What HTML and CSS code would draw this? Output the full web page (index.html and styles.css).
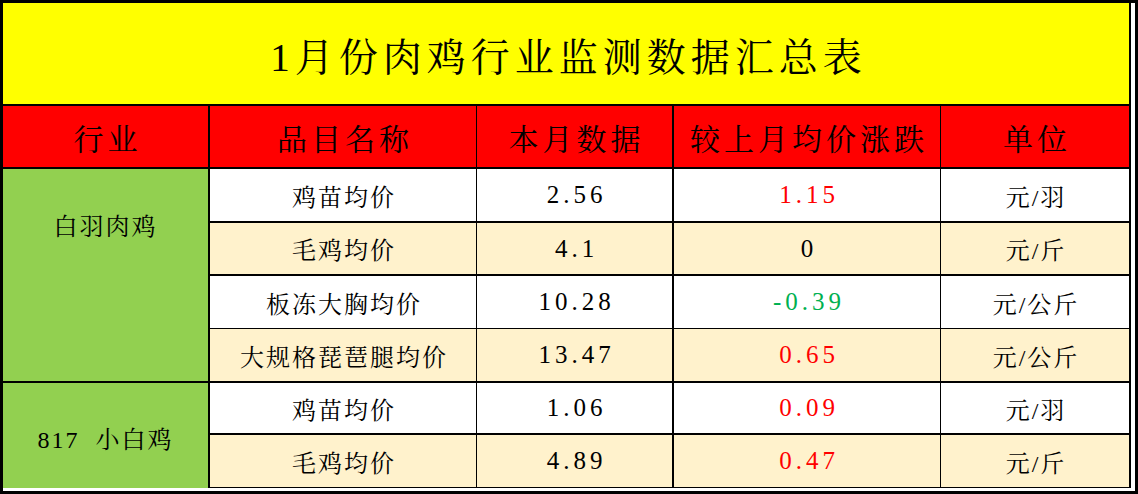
FILE: index.html
```html
<!DOCTYPE html>
<html lang="zh-CN">
<head>
<meta charset="utf-8">
<title>1月份肉鸡行业监测数据汇总表</title>
<link rel="stylesheet" href="styles.css">
</head>
<body>
<div class="frame">
  <div class="sheet">
    <div class="grid">
      <div class="title">1月份肉鸡行业监测数据汇总表</div>

      <div class="hd c1">行业</div>
      <div class="hd c2">品目名称</div>
      <div class="hd c3">本月数据</div>
      <div class="hd c4">较上月均价涨跌</div>
      <div class="hd c5">单位</div>

      <div class="ind ind-a">白羽肉鸡</div>
      <div class="ind ind-b">817&nbsp;&nbsp;小白鸡</div>

      <div class="cell c2 white bb2">鸡苗均价</div>
      <div class="cell c3 white bb2 num">2.56</div>
      <div class="cell c4 white bb2 num up">1.15</div>
      <div class="cell c5 white bb2">元/羽</div>

      <div class="cell c2 cream bb2">毛鸡均价</div>
      <div class="cell c3 cream bb2 num">4.1</div>
      <div class="cell c4 cream bb2 num">0</div>
      <div class="cell c5 cream bb2">元/斤</div>

      <div class="cell c2 white bb1">板冻大胸均价</div>
      <div class="cell c3 white bb1 num">10.28</div>
      <div class="cell c4 white bb1 num down">-0.39</div>
      <div class="cell c5 white bb1">元/公斤</div>

      <div class="cell c2 cream bb2">大规格琵琶腿均价</div>
      <div class="cell c3 cream bb2 num">13.47</div>
      <div class="cell c4 cream bb2 num up">0.65</div>
      <div class="cell c5 cream bb2">元/公斤</div>

      <div class="cell c2 white bb2">鸡苗均价</div>
      <div class="cell c3 white bb2 num">1.06</div>
      <div class="cell c4 white bb2 num up">0.09</div>
      <div class="cell c5 white bb2">元/羽</div>

      <div class="cell c2 cream bb1">毛鸡均价</div>
      <div class="cell c3 cream bb1 num">4.89</div>
      <div class="cell c4 cream bb1 num up">0.47</div>
      <div class="cell c5 cream bb1">元/斤</div>
    </div>
  </div>
</div>
</body>
</html>
```

FILE: styles.css
```css
html, body {
  margin: 0;
  padding: 0;
  background: #000;
}

.frame {
  width: 1138px;
  height: 494px;
  box-sizing: border-box;
  padding: 3px;
  background: #000;
}

.sheet {
  width: 1132px;
  height: 488px;
  background: #fff;
}

.grid {
  display: grid;
  width: 1128px;
  grid-template-columns: 207px 267px 197px 267px 190px;
  grid-template-rows: 103px 63px 54px 53px 53px 54px 52px 53px;
  font-family: "Liberation Serif", "Noto Serif CJK SC", "Noto Sans CJK SC", serif;
  color: #000;
}

.grid > div {
  box-sizing: border-box;
  display: flex;
  align-items: center;
  justify-content: center;
  white-space: nowrap;
}

.title {
  grid-column: 1 / -1;
  background: #ffff00;
  border-bottom: 2px solid #000;
  border-right: 2px solid #000;
  font-size: 39px;
  letter-spacing: 5px;
  padding-left: 5px;
}

.hd {
  background: #ff0000;
  border-bottom: 2px solid #000;
  font-size: 30px;
  letter-spacing: 4px;
  padding-left: 4px;
}

.c1 { border-right: 2px solid #000; }
.c2 { border-right: 1px solid #000; }
.c3 { border-right: 2px solid #000; }
.c4 { border-right: 1px solid #000; }
.c5 { border-right: 2px solid #000; }

.ind {
  grid-column: 1;
  background: #92d050;
  border-right: 2px solid #000;
  font-size: 24px;
  letter-spacing: 2px;
}

.ind-a {
  grid-row: 3 / span 4;
  border-bottom: 2px solid #000;
  align-items: flex-start !important;
  padding-top: 38px;
}

.ind-b {
  grid-row: 7 / span 2;
  padding-top: 4px;
}

.cell {
  font-size: 24px;
  letter-spacing: 2px;
  padding-left: 2px;
}

.num {
  font-size: 25px;
  letter-spacing: 4px;
  padding-left: 4px;
}

.white { background: #ffffff; }
.cream { background: #fff2cc; }

.bb2 { border-bottom: 2px solid #000; }
.bb1 { border-bottom: 1px solid #000; }

.up { color: #ff0000; }
.down { color: #00b050; }
```
